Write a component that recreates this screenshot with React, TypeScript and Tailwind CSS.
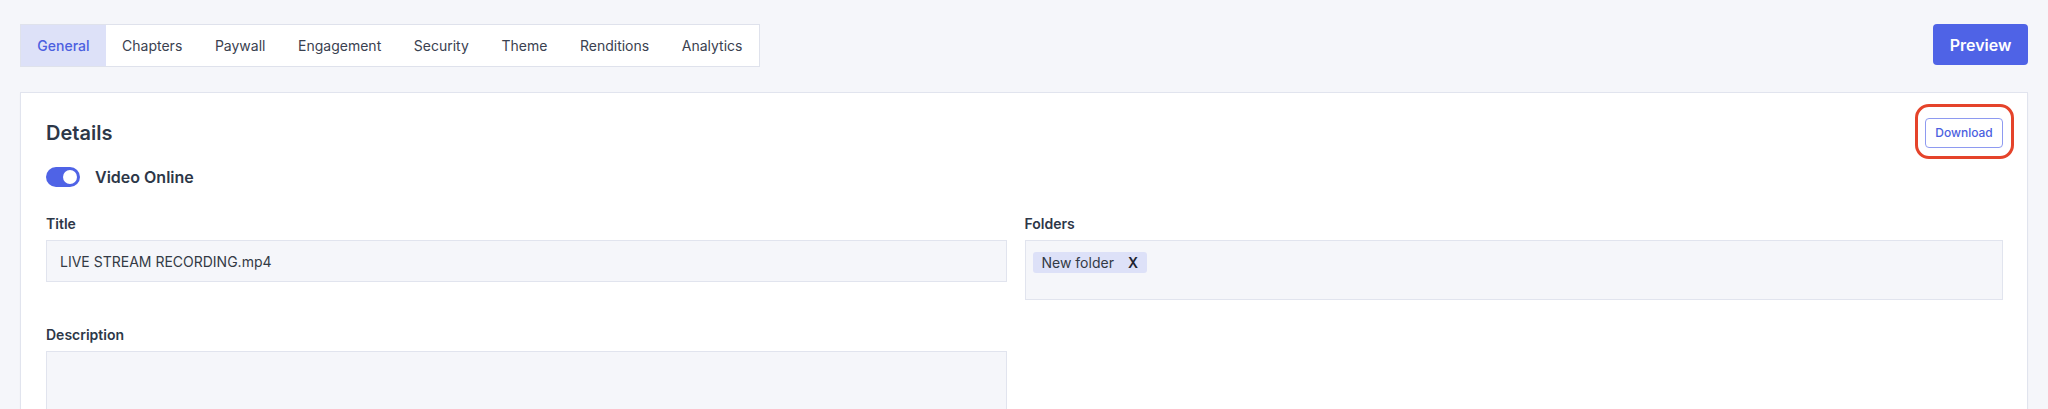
import { useState } from 'react';

const tabs = ['General', 'Chapters', 'Paywall', 'Engagement', 'Security', 'Theme', 'Renditions', 'Analytics'];

const App = () => {
  const [active, setActive] = useState('General');
  const [online, setOnline] = useState(true);

  return (
    <div className="min-h-screen bg-[#f5f6fa] px-[20px] pt-[24px] font-['Inter',sans-serif] text-[#2d3748]">
      {/* Header: tabs + preview */}
      <div className="flex items-start justify-between">
        <div className="flex h-[43px] border border-[#dfe2ec] bg-white">
          {tabs.map((tab) => (
            <button
              key={tab}
              onClick={() => setActive(tab)}
              className={
                tab === active
                  ? 'px-[16.3px] text-[14px] font-medium text-[#4c5fe0] bg-[#dde1f8]'
                  : 'px-[16.3px] text-[14px] text-[#3a4150]'
              }
            >
              {tab}
            </button>
          ))}
        </div>
        <button className="h-[41px] w-[95px] rounded-[4px] bg-[#4f63e6] text-[16px] font-semibold text-white">
          Preview
        </button>
      </div>

      {/* Details card */}
      <div className="mt-[25px] border border-[#e1e4ee] bg-white pl-[25px] pr-[24px] pt-[25px] pb-[40px] shadow-[0_1px_2px_rgba(0,0,0,0.03)]">
        <div className="flex h-[30px] items-center justify-between">
          <h2 className="text-[20px] font-semibold leading-[28px] text-[#2d3748]">Details</h2>
          <div className="relative">
            <button className="h-[30px] w-[78px] rounded-[4px] border border-[#8e9af0] bg-white text-[12px] font-medium text-[#4c5fe0]">
              Download
            </button>
            <div className="pointer-events-none absolute -left-[10px] -right-[11px] -top-[14px] -bottom-[11px] rounded-[14px] border-[3.5px] border-[#e5432a]" />
          </div>
        </div>

        <div className="mt-[17px] flex items-center">
          <button
            onClick={() => setOnline(!online)}
            className={`flex h-[20px] w-[34px] items-center rounded-full px-[3px] ${online ? 'justify-end bg-[#4f63e6]' : 'justify-start bg-[#cbd0dc]'}`}
          >
            <span className="h-[14px] w-[14px] rounded-full bg-white" />
          </button>
          <span className="ml-[15px] text-[16px] font-semibold text-[#2d3748]">Video Online</span>
        </div>

        <div className="mt-[25px] grid grid-cols-2 gap-y-[25px]">
          <div className="pr-[18px]">
            <label className="block text-[14px] font-semibold leading-[20px] text-[#2d3748]">Title</label>
            <div className="mt-[6px] flex h-[42px] items-center border border-[#e1e4ee] bg-[#f5f6fa] px-[13px] text-[14px] text-[#333a45]">
              LIVE STREAM RECORDING.mp4
            </div>
          </div>
          <div>
            <label className="block text-[14px] font-semibold leading-[20px] text-[#2d3748]">Folders</label>
            <div className="mt-[6px] h-[60px] border border-[#e1e4ee] bg-[#f5f6fa] px-[7px] pt-[9px]">
              <span className="inline-flex h-[21px] items-center gap-[14px] rounded-[3px] bg-[#dde1f8] px-[9px] text-[14px] text-[#333a45]">
                New folder
                <span className="font-semibold text-[#1f2430]">X</span>
              </span>
            </div>
          </div>
          <div className="pr-[18px]">
            <label className="block text-[14px] font-semibold leading-[20px] text-[#2d3748]">Description</label>
            <div className="mt-[6px] h-[100px] border border-[#e1e4ee] bg-[#f5f6fa]" />
          </div>
        </div>
      </div>
    </div>
  );
};

export default App;
